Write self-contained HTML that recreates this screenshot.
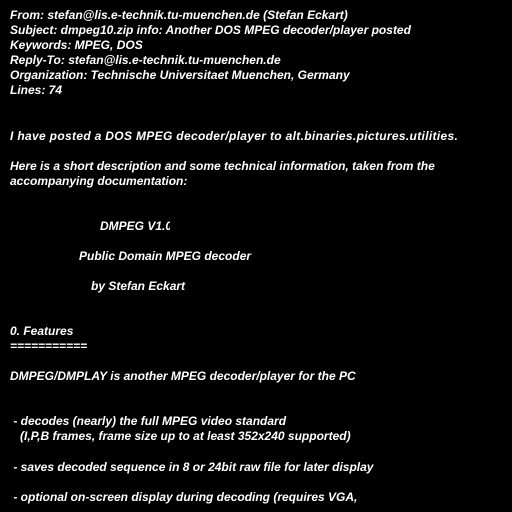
<html><head><style>
body{margin:0;width:512px;height:512px;background:#000;overflow:hidden;position:relative}
div{position:absolute;color:#fff;font:italic bold 12px "Liberation Sans",sans-serif;white-space:pre;line-height:15px}
</style></head><body>
<div style="left:10px;top:8px">From: stefan@lis.e-technik.tu-muenchen.de (Stefan Eckart)
Subject: dmpeg10.zip info: Another DOS MPEG decoder/player posted
Keywords: MPEG, DOS
Reply-To: stefan@lis.e-technik.tu-muenchen.de
Organization: Technische Universitaet Muenchen, Germany
Lines: 74</div>
<div style="left:10px;top:129px;letter-spacing:0.33px">I have posted a DOS MPEG decoder/player to alt.binaries.pictures.utilities.</div>
<div style="left:10px;top:159px">Here is a short description and some technical information, taken from the
accompanying documentation:</div>
<div style="left:100px;top:219px;width:70px;overflow:hidden">DMPEG V1.0</div>
<div style="left:79px;top:249px">Public Domain MPEG decoder</div>
<div style="left:91px;top:279px">by Stefan Eckart</div>
<div style="left:10px;top:324px">0. Features
===========</div>
<div style="left:10px;top:369px">DMPEG/DMPLAY is another MPEG decoder/player for the PC</div>
<div style="left:10px;top:414px"> - decodes (nearly) the full MPEG video standard
   (I,P,B frames, frame size up to at least 352x240 supported)</div>
<div style="left:10px;top:460px"> - saves decoded sequence in 8 or 24bit raw file for later display</div>
<div style="left:10px;top:490px"> - optional on-screen display during decoding (requires VGA,</div>
</body></html>
